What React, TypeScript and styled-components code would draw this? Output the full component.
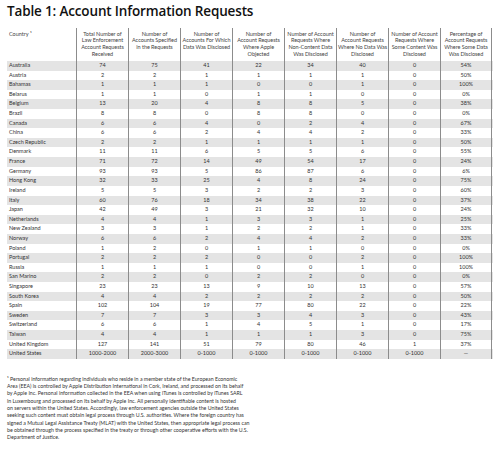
import React from 'react';
import styled, { createGlobalStyle } from 'styled-components';

const GlobalStyle = createGlobalStyle`
    html, body {
        margin: 0;
        padding: 0;
        background: #fff;
    }
    body {
        font-family: Lato, "Open Sans", sans-serif;
        color: #333;
    }
`;

const Page = styled.div`
    width: 500px;
    height: 460px;
    padding: 3px 7px 0;
    box-sizing: border-box;
    overflow: hidden;
`;

const Title = styled.h1`
    margin: 0;
    font-family: "Open Sans", Lato, sans-serif;
    font-size: 13.5px;
    line-height: 17px;
    font-weight: 600;
    letter-spacing: -0.15px;
    color: #111;
`;

const Table = styled.div`
    margin-top: 8px;
    width: 486px;
    font-size: 5.5px;
    color: #333;
`;

const Grid = styled.div<{ $shade?: boolean; $height: number }>`
    display: grid;
    grid-template-columns: 69px repeat(8, 52px);
    height: ${p => p.$height}px;
    background: ${p => (p.$shade ? '#e4e4e4' : '#fff')};
`;

const HeadCell = styled.div<{ $last?: boolean }>`
    padding: 2.5px 0 0;
    text-align: center;
    line-height: 6.7px;
    white-space: nowrap;
    letter-spacing: -0.05px;
    color: #444;
    border-left: 1px solid #8c8c8c;
    border-right: ${p => (p.$last ? '1px solid #8c8c8c' : 'none')};
`;

const CountryHead = styled.div`
    padding: 2.5px 2px 0;
    line-height: 6.7px;
    color: #444;
`;

const CountryCell = styled.div`
    padding: 0 2px;
    line-height: 9.62px;
    white-space: nowrap;
`;

const NumCell = styled.div<{ $last?: boolean }>`
    line-height: 9.62px;
    text-align: center;
    white-space: nowrap;
    border-left: 1px solid #8c8c8c;
    border-right: ${p => (p.$last ? '1px solid #8c8c8c' : 'none')};
`;

const Footnote = styled.p`
    margin: 17px 0 0;
    font-size: 5.25px;
    line-height: 7.3px;
    color: #333;
    white-space: nowrap;
`;

const headers: string[][] = [
    ['Total Number of', 'Law Enforcement', 'Account Requests', 'Received'],
    ['Number of', 'Accounts Specified', 'in the Requests'],
    ['Number of', 'Accounts For Which', 'Data Was Disclosed'],
    ['Number of', 'Account Requests', 'Where Apple', 'Objected'],
    ['Number of Account', 'Requests Where', 'Non-Content Data', 'Was Disclosed'],
    ['Number of', 'Account Requests', 'Where No Data Was', 'Disclosed'],
    ['Number of Account', 'Requests Where', 'Some Content Was', 'Disclosed'],
    ['Percentage of', 'Account Requests', 'Where Some Data', 'Was Disclosed'],
];

const rows: [string, ...string[]][] = [
    ['Australia', '74', '75', '41', '22', '34', '40', '0', '54%'],
    ['Austria', '2', '2', '1', '1', '1', '1', '0', '50%'],
    ['Bahamas', '1', '1', '1', '0', '0', '1', '0', '100%'],
    ['Belarus', '1', '1', '0', '1', '1', '0', '0', '0%'],
    ['Belgium', '13', '20', '4', '8', '8', '5', '0', '38%'],
    ['Brazil', '8', '8', '0', '8', '8', '0', '0', '0%'],
    ['Canada', '6', '6', '4', '0', '2', '4', '0', '67%'],
    ['China', '6', '6', '2', '4', '4', '2', '0', '33%'],
    ['Czech Republic', '2', '2', '1', '1', '1', '1', '0', '50%'],
    ['Denmark', '11', '11', '6', '5', '5', '6', '0', '55%'],
    ['France', '71', '72', '14', '49', '54', '17', '0', '24%'],
    ['Germany', '93', '93', '5', '86', '87', '6', '0', '6%'],
    ['Hong Kong', '32', '33', '25', '4', '8', '24', '0', '75%'],
    ['Ireland', '5', '5', '3', '2', '2', '3', '0', '60%'],
    ['Italy', '60', '76', '18', '34', '38', '22', '0', '37%'],
    ['Japan', '42', '49', '3', '21', '32', '10', '0', '24%'],
    ['Netherlands', '4', '4', '1', '3', '3', '1', '0', '25%'],
    ['New Zealand', '3', '3', '1', '2', '2', '1', '0', '33%'],
    ['Norway', '6', '6', '2', '4', '4', '2', '0', '33%'],
    ['Poland', '1', '2', '0', '1', '1', '0', '0', '0%'],
    ['Portugal', '2', '2', '2', '0', '0', '2', '0', '100%'],
    ['Russia', '1', '1', '1', '0', '0', '1', '0', '100%'],
    ['San Marino', '2', '2', '0', '2', '2', '0', '0', '0%'],
    ['Singapore', '23', '23', '13', '9', '10', '13', '0', '57%'],
    ['South Korea', '4', '4', '2', '2', '2', '2', '0', '50%'],
    ['Spain', '102', '104', '19', '77', '80', '22', '0', '22%'],
    ['Sweden', '7', '7', '3', '3', '4', '3', '0', '43%'],
    ['Switzerland', '6', '6', '1', '4', '5', '1', '0', '17%'],
    ['Taiwan', '4', '4', '1', '1', '1', '3', '0', '75%'],
    ['United Kingdom', '127', '141', '51', '79', '80', '46', '1', '37%'],
    ['United States', '1000-2000', '2000-3000', '0-1000', '0-1000', '0-1000', '0-1000', '0-1000', '—'],
];

const footnoteLines = [
    '¹ Personal information regarding individuals who reside in a member state of the European Economic',
    'Area (EEA) is controlled by Apple Distribution International in Cork, Ireland, and processed on its behalf',
    'by Apple Inc. Personal information collected in the EEA when using iTunes is controlled by iTunes SARL',
    'in Luxembourg and processed on its behalf by Apple Inc. All personally identifiable content is hosted',
    'on servers within the United States. Accordingly, law enforcement agencies outside the United States',
    'seeking such content must obtain legal process through U.S. authorities. Where the foreign country has',
    'signed a Mutual Legal Assistance Treaty (MLAT) with the United States, then appropriate legal process can',
    'be obtained through the process specified in the treaty or through other cooperative efforts with the U.S.',
    'Department of Justice.',
];

const withBreaks = (lines: string[]) =>
    lines.map((l, i) => (
        <React.Fragment key={i}>
            {l}
            {i < lines.length - 1 && <br />}
        </React.Fragment>
    ));

export default function App() {
    return (
        <Page>
            <GlobalStyle />
            <Title>Table 1: Account Information Requests</Title>
            <Table>
                <Grid $height={33}>
                    <CountryHead>Country ¹</CountryHead>
                    {headers.map((lines, i) => (
                        <HeadCell key={i} $last={i === headers.length - 1}>
                            {withBreaks(lines)}
                        </HeadCell>
                    ))}
                </Grid>
                {rows.map(([country, ...vals], i) => (
                    <Grid key={country} $height={9.62} $shade={i % 2 === 0}>
                        <CountryCell>{country}</CountryCell>
                        {vals.map((v, j) => (
                            <NumCell key={j} $last={j === vals.length - 1}>
                                {v}
                            </NumCell>
                        ))}
                    </Grid>
                ))}
            </Table>
            <Footnote>{withBreaks(footnoteLines)}</Footnote>
        </Page>
    );
}
